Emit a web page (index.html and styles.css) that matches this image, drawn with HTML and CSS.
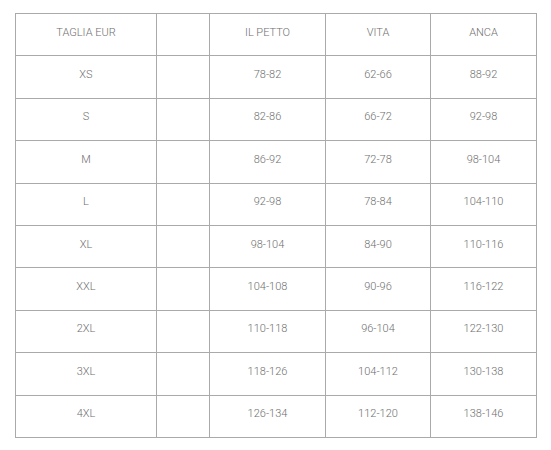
FILE: index.html
```html
<!DOCTYPE html>
<html>
<head>
<meta charset="utf-8">
<link rel="stylesheet" href="styles.css">
</head>
<body>
<table class="size-table">
  <colgroup>
    <col class="c1"><col class="c2"><col class="c3"><col class="c4"><col class="c5">
  </colgroup>
  <tr><td>TAGLIA EUR</td><td></td><td>IL PETTO</td><td>VITA</td><td>ANCA</td></tr>
  <tr><td>XS</td><td></td><td>78-82</td><td>62-66</td><td>88-92</td></tr>
  <tr><td>S</td><td></td><td>82-86</td><td>66-72</td><td>92-98</td></tr>
  <tr><td>M</td><td></td><td>86-92</td><td>72-78</td><td>98-104</td></tr>
  <tr><td>L</td><td></td><td>92-98</td><td>78-84</td><td>104-110</td></tr>
  <tr><td>XL</td><td></td><td>98-104</td><td>84-90</td><td>110-116</td></tr>
  <tr><td>XXL</td><td></td><td>104-108</td><td>90-96</td><td>116-122</td></tr>
  <tr><td>2XL</td><td></td><td>110-118</td><td>96-104</td><td>122-130</td></tr>
  <tr><td>3XL</td><td></td><td>118-126</td><td>104-112</td><td>130-138</td></tr>
  <tr><td>4XL</td><td></td><td>126-134</td><td>112-120</td><td>138-146</td></tr>
</table>
</body>
</html>
```
FILE: styles.css
```css
html, body {
  margin: 0;
  padding: 0;
  background: #ffffff;
}
body {
  padding: 13px 0 0 15px;
  font-family: Roboto, "Liberation Sans", sans-serif;
}
.size-table {
  border-collapse: collapse;
  table-layout: fixed;
  width: 521px;
}
.c1 { width: 141px; }
.c2 { width: 53px; }
.c3 { width: 116px; }
.c4 { width: 105px; }
.c5 { width: 106px; }
.size-table td {
  border: 1px solid #aaaaaa;
  height: 42.4px;
  padding: 0 0 5px 0;
  box-sizing: border-box;
  text-align: center;
  vertical-align: middle;
  font-size: 11px;
  font-weight: 300;
  color: #6f6f6f;
}
```
